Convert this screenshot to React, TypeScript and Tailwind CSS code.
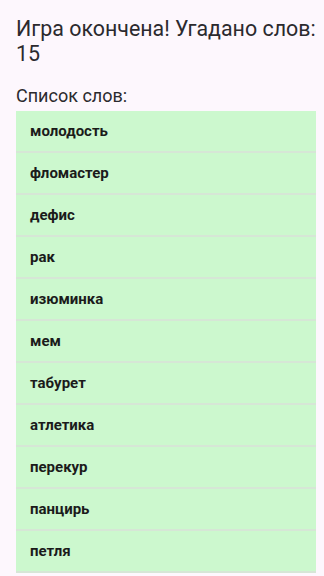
import React from "react";

const words = [
  "молодость",
  "фломастер",
  "дефис",
  "рак",
  "изюминка",
  "мем",
  "табурет",
  "атлетика",
  "перекур",
  "панцирь",
  "петля",
];

export default function App() {
  return (
    <div
      className="w-[324px] h-[576px] overflow-hidden bg-[#fdf7fd] pl-4 pt-[16px]"
      style={{ fontFamily: "Roboto, 'Noto Sans', sans-serif" }}
    >
      <h1 className="whitespace-nowrap text-[21.4px] leading-[25px] text-[#2b2a2e] font-normal">
        Игра окончена! Угадано слов:
        <br />
        15
      </h1>
      <h2 className="mt-[19px] text-[18px] leading-[22px] text-[#2b2a2e] font-normal">
        Список слов:
      </h2>
      <div className="mt-[4px] w-[300px] bg-[#ccf8ce]">
        {words.map((w, i) => (
          <div
            key={i}
            className="h-[42px] flex items-center px-[14px] border-b-2 border-[#d6e6d6] text-[15px] font-bold text-[#1b1b1b]"
          >
            {w}
          </div>
        ))}
      </div>
    </div>
  );
}
